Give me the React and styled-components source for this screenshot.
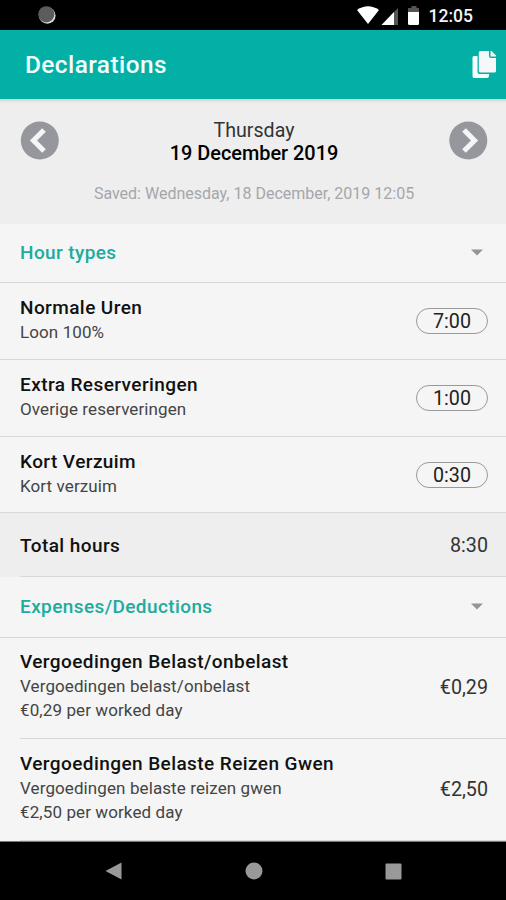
import styled, { createGlobalStyle } from 'styled-components';

const GlobalStyle = createGlobalStyle`
  * {
    box-sizing: border-box;
  }
  body {
    margin: 0;
    background: #000;
    font-family: Roboto, "Liberation Sans", sans-serif;
    color: #111;
  }
`;

const Screen = styled.div`
  width: 506px;
  height: 900px;
  display: flex;
  flex-direction: column;
  overflow: hidden;
  background: #f5f5f5;
`;

const StatusBar = styled.div`
  height: 30px;
  flex: none;
  display: flex;
  align-items: center;
  justify-content: space-between;
  padding: 0 33px 0 37px;
  background: #000;
`;

const StatusIcons = styled.div`
  display: flex;
  align-items: center;
`;

const Clock = styled.span`
  margin-left: 9px;
  padding-top: 2px;
  font-size: 17.5px;
  line-height: 20px;
  font-weight: 500;
  color: #f4f4f4;
`;

const Header = styled.header`
  height: 69px;
  flex: none;
  display: flex;
  align-items: center;
  justify-content: space-between;
  padding: 0 9px 0 25px;
  background: #02b0a6;
`;

const Title = styled.h1`
  margin: 0;
  padding-top: 1px;
  font-size: 24.4px;
  line-height: 28px;
  font-weight: 500;
  letter-spacing: 0.43px;
  color: #f2fffd;
`;

const DatePanel = styled.div`
  height: 125px;
  flex: none;
  padding: 20px 18px 0 20px;
  background: linear-gradient(#cfd2d2, #eee 4px);
`;

const DateLine = styled.div`
  display: flex;
  align-items: center;
  justify-content: space-between;
  height: 43px;
`;

const DateText = styled.div`
  padding-top: 2px;
  font-size: 19.9px;
  line-height: 23px;
  text-align: center;
`;

const Weekday = styled.div`
  font-size: 19.6px;
  color: #333;
`;

const Day = styled.div`
  font-weight: 500;
  color: #000;
`;

const Saved = styled.div`
  margin-top: 22px;
  font-size: 16px;
  line-height: 20px;
  text-align: center;
  color: #a5a6ab;
`;

const SectionHeader = styled.div`
  height: ${({ $height }) => $height}px;
  flex: none;
  display: flex;
  align-items: center;
  justify-content: space-between;
  padding: 0 23px 0 20px;
  border-bottom: 1px solid #d6d6d6;
`;

const SectionTitle = styled.h2`
  margin: 0;
  font-size: 19px;
  line-height: 24px;
  font-weight: 500;
  letter-spacing: 0.4px;
  color: #20ab9c;
`;

const Row = styled.div`
  height: ${({ $height }) => $height}px;
  flex: none;
  display: flex;
  align-items: center;
  justify-content: space-between;
  padding-right: 18px;
  margin-left: ${({ $inset }) => ($inset ? 20 : 0)}px;
  padding-left: ${({ $inset }) => ($inset ? 0 : 20)}px;
  border-bottom: 1px solid #d8d8d8;
`;

const RowText = styled.div`
  padding-bottom: ${({ $inset }) => ($inset ? 4 : 2)}px;
`;

const TotalRow = styled.div`
  height: 64px;
  flex: none;
  padding-left: 20px;
  background: #eee;
`;

const TotalLine = styled.div`
  height: 64px;
  display: flex;
  align-items: center;
  justify-content: space-between;
  padding: 2px 18px 0 0;
  border-bottom: 1px solid #d8d8d8;
`;

const Name = styled.div`
  font-size: 19px;
  line-height: 24px;
  font-weight: 500;
  letter-spacing: 0.42px;
  color: #111;
`;

const Detail = styled.div`
  font-size: 17px;
  line-height: 24px;
  letter-spacing: 0.1px;
  color: #444;
`;

const Amount = styled.div`
  font-size: 19.7px;
  line-height: 24px;
  color: #333;
`;

const Pill = styled(Amount)`
  width: 72px;
  height: 26px;
  padding-top: 1px;
  border: 1px solid #999;
  border-radius: 13px;
  text-align: center;
  color: #222;
`;

const NavBar = styled.nav`
  height: 59px;
  flex: none;
  display: flex;
  align-items: center;
  justify-content: space-between;
  padding: 0 104px 0 105px;
  border-top: 1px solid #777;
  background: #000;
`;

const hours = [
  { name: 'Normale Uren', detail: 'Loon 100%', value: '7:00', height: 77 },
  { name: 'Extra Reserveringen', detail: 'Overige reserveringen', value: '1:00', height: 77 },
  { name: 'Kort Verzuim', detail: 'Kort verzuim', value: '0:30', height: 76 },
];

const expenses = [
  {
    name: 'Vergoedingen Belast/onbelast',
    detail: 'Vergoedingen belast/onbelast',
    rate: '€0,29 per worked day',
    value: '€0,29',
    height: 101,
  },
  {
    name: 'Vergoedingen Belaste Reizen Gwen',
    detail: 'Vergoedingen belaste reizen gwen',
    rate: '€2,50 per worked day',
    value: '€2,50',
    height: 102,
  },
];

function Arrow({ next }) {
  return (
    <svg width="39" height="39" viewBox="0 0 39 39">
      <circle cx={next ? 19.3 : 19.8} cy="19.5" r="19" fill="#96979d" />
      <path
        d={next ? 'M15 9 L25.5 19.5 L15 30' : 'M24 9 L13.5 19.5 L24 30'}
        fill="none"
        stroke="#f5f5f5"
        strokeWidth="5.2"
      />
    </svg>
  );
}

function Caret() {
  return (
    <svg width="12" height="8" viewBox="0 0 12 8">
      <path d="M0 0.5 H12 L6 6.5 Z" fill="#959595" />
    </svg>
  );
}

function CopyIcon() {
  return (
    <svg width="25" height="30" viewBox="0 0 25 30">
      <path d="M2 6 H5.5 V22 Q5.5 24 7.5 24 H17 V26 Q17 28 15 28 H2 Q0.5 28 0.5 26 V7.5 Q0.5 6 2 6 Z" fill="#f4fffd" />
      <path d="M8.5 1 H17 V6 Q17 8 19 8 H24 V21 Q24 22.5 22.5 22.5 H8.5 Q6.8 22.5 6.8 21 V2.5 Q6.8 1 8.5 1 Z" fill="#f4f8f8" />
      <path d="M18.5 1 H19.5 L24 5.5 V6.5 H18.5 Z" fill="#f4f8f8" />
    </svg>
  );
}

export default function App() {
  return (
    <>
      <GlobalStyle />
      <Screen>
        <StatusBar>
          <svg width="20" height="20" viewBox="0 0 20 20">
            <circle cx="10.3" cy="10.5" r="8.3" fill="#ddd" />
            <circle cx="9.3" cy="9.3" r="8.1" fill="#5c5c5c" />
          </svg>
          <StatusIcons>
            <svg width="63" height="20" viewBox="0 0 63 20">
              <path d="M0 5 Q11 -2.5 22 5 L11 19 Z" fill="#fff" />
              <path d="M41 3 V20 H24.5 Z" fill="#555" />
              <path d="M37 7 V20 H24.5 Z" fill="#fff" />
              <path d="M54.5 1 H59.5 V3 H62 V8 H51 V3 H54.5 Z" fill="#555" />
              <path d="M51 7 H62 V18.5 Q62 20 60.5 20 H52.5 Q51 20 51 18.5 Z" fill="#fff" />
            </svg>
            <Clock>12:05</Clock>
          </StatusIcons>
        </StatusBar>

        <Header>
          <Title>Declarations</Title>
          <CopyIcon />
        </Header>

        <DatePanel>
          <DateLine>
            <Arrow />
            <DateText>
              <Weekday>Thursday</Weekday>
              <Day>19 December 2019</Day>
            </DateText>
            <Arrow next />
          </DateLine>
          <Saved>Saved: Wednesday, 18 December, 2019 12:05</Saved>
        </DatePanel>

        <SectionHeader $height={59}>
          <SectionTitle>Hour types</SectionTitle>
          <Caret />
        </SectionHeader>
        {hours.map((item) => (
          <Row key={item.name} $height={item.height}>
            <RowText>
              <Name>{item.name}</Name>
              <Detail>{item.detail}</Detail>
            </RowText>
            <Pill>{item.value}</Pill>
          </Row>
        ))}
        <TotalRow>
          <TotalLine>
            <Name>Total hours</Name>
            <Amount>8:30</Amount>
          </TotalLine>
        </TotalRow>

        <SectionHeader $height={61}>
          <SectionTitle>Expenses/Deductions</SectionTitle>
          <Caret />
        </SectionHeader>
        {expenses.map((item) => (
          <Row key={item.name} $height={item.height} $inset>
            <RowText $inset>
              <Name>{item.name}</Name>
              <Detail>{item.detail}</Detail>
              <Detail>{item.rate}</Detail>
            </RowText>
            <Amount>{item.value}</Amount>
          </Row>
        ))}

        <NavBar>
          <svg width="17" height="18" viewBox="0 0 17 18">
            <path d="M0.5 9 L16.5 0.5 V17.5 Z" fill="#999" />
          </svg>
          <svg width="18" height="18" viewBox="0 0 18 18">
            <circle cx="9" cy="9" r="8.5" fill="#999" />
          </svg>
          <svg width="17" height="17" viewBox="0 0 17 17">
            <rect x="0.5" y="0.5" width="16" height="16" rx="1" fill="#999" />
          </svg>
        </NavBar>
      </Screen>
    </>
  );
}
